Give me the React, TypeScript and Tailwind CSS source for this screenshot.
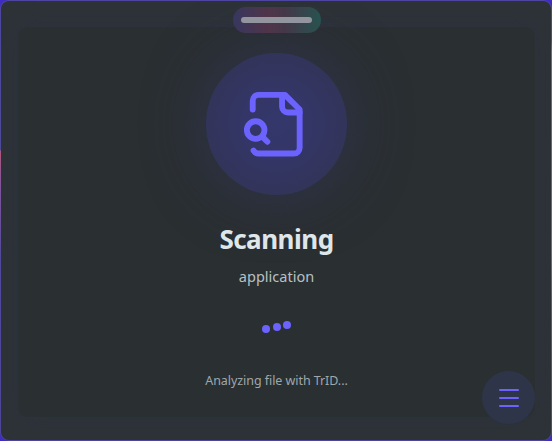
import React from "react";

function ScanIcon() {
  return (
    <svg
      className="h-[70.4px] w-[70.4px]"
      viewBox="0 0 24 24"
      fill="none"
      stroke="#6c63ff"
      strokeWidth="2"
      strokeLinecap="round"
      strokeLinejoin="round"
    >
      <path d="M14 2v4a2 2 0 0 0 2 2h4" />
      <path d="M4.268 21a2 2 0 0 0 1.727 1H18a2 2 0 0 0 2-2V7l-5-5H6a2 2 0 0 0-2 2v3" />
      <path d="m9 18-1.5-1.5" />
      <circle cx="5" cy="14" r="3" />
    </svg>
  );
}

export default function App() {
  return (
    <div className="h-[441px] w-[552px] overflow-hidden bg-[#3f2cc0] font-['Noto_Sans','Open_Sans',sans-serif]">
      <div className="flex h-full w-full rounded-[9px] bg-[linear-gradient(180deg,#4d45a2_0px,#4c4b98_150px,#b0587c_151px,#83549c_185px,#50489c_260px,#4d4599_441px)]">
        <div className="relative h-full w-full rounded-[9px] bg-[linear-gradient(180deg,#4d45a2_0px,#4f48a0_40px,#8a589c_52px,#7b55a0_160px,#94588f_250px,#6a50a0_300px,#4d4599_441px)] bg-[length:1px_100%] bg-right bg-no-repeat p-px">
          <div className="h-full w-full overflow-hidden rounded-[8px] bg-[#2d3337] px-[17px] pt-[26px]">
            <main className="flex h-[390px] w-[517px] flex-col items-center rounded-[10px] bg-[#2a2f32] pt-[26px] shadow-[0_0_22px_4px_rgba(46,49,62,0.8)]">
              <div className="flex h-[142px] w-[141px] shrink-0 items-center justify-center rounded-full bg-[radial-gradient(circle,#33376a_0%,#333666_35%,#33345a_70%)] pt-px shadow-[0_0_60px_rgba(50,53,90,0.75)]">
                <ScanIcon />
              </div>
              <h1 className="mt-[26px] text-[26px] leading-[36px] font-bold tracking-[-0.5px] whitespace-nowrap text-[#dfe6e9]">
                Scanning
              </h1>
              <p className="mt-[9px] text-[14.5px] leading-[20px] whitespace-nowrap text-[#b7c0c5]">
                application
              </p>
              <div className="mt-[35px] flex h-[13px] items-start gap-[2.4px]">
                <i className="mt-[4.2px] h-2 w-2 rounded-full bg-[#6c63ff]" />
                <i className="mt-[2.4px] h-2 w-2 rounded-full bg-[#6c63ff]" />
                <i className="mt-0 h-2 w-2 rounded-full bg-[#6c63ff]" />
              </div>
              <p className="mt-[37px] text-[12.5px] leading-[20px] tracking-[-0.06px] whitespace-nowrap text-[#9fa7ac]">
                Analyzing file with TrID...
              </p>
            </main>
          </div>

          <div className="absolute top-[7px] left-[233px] flex h-[26px] w-[88px] items-center rounded-full bg-[linear-gradient(90deg,#37375f_0%,#503449_40%,#443848_60%,#27534f_100%)] pl-[8px]">
            <span className="h-[6px] w-[71px] rounded-full bg-[#92949e]" />
          </div>

          <button
            aria-label="Menu"
            className="absolute top-[371px] left-[482px] flex h-[53px] w-[53px] flex-col items-center justify-center gap-[6px] rounded-full bg-[#2f3549]"
          >
            <span className="h-[2px] w-5 rounded-full bg-[#6c63ff]" />
            <span className="h-[2px] w-5 rounded-full bg-[#6c63ff]" />
            <span className="h-[2px] w-5 rounded-full bg-[#6c63ff]" />
          </button>
        </div>
      </div>
    </div>
  );
}
